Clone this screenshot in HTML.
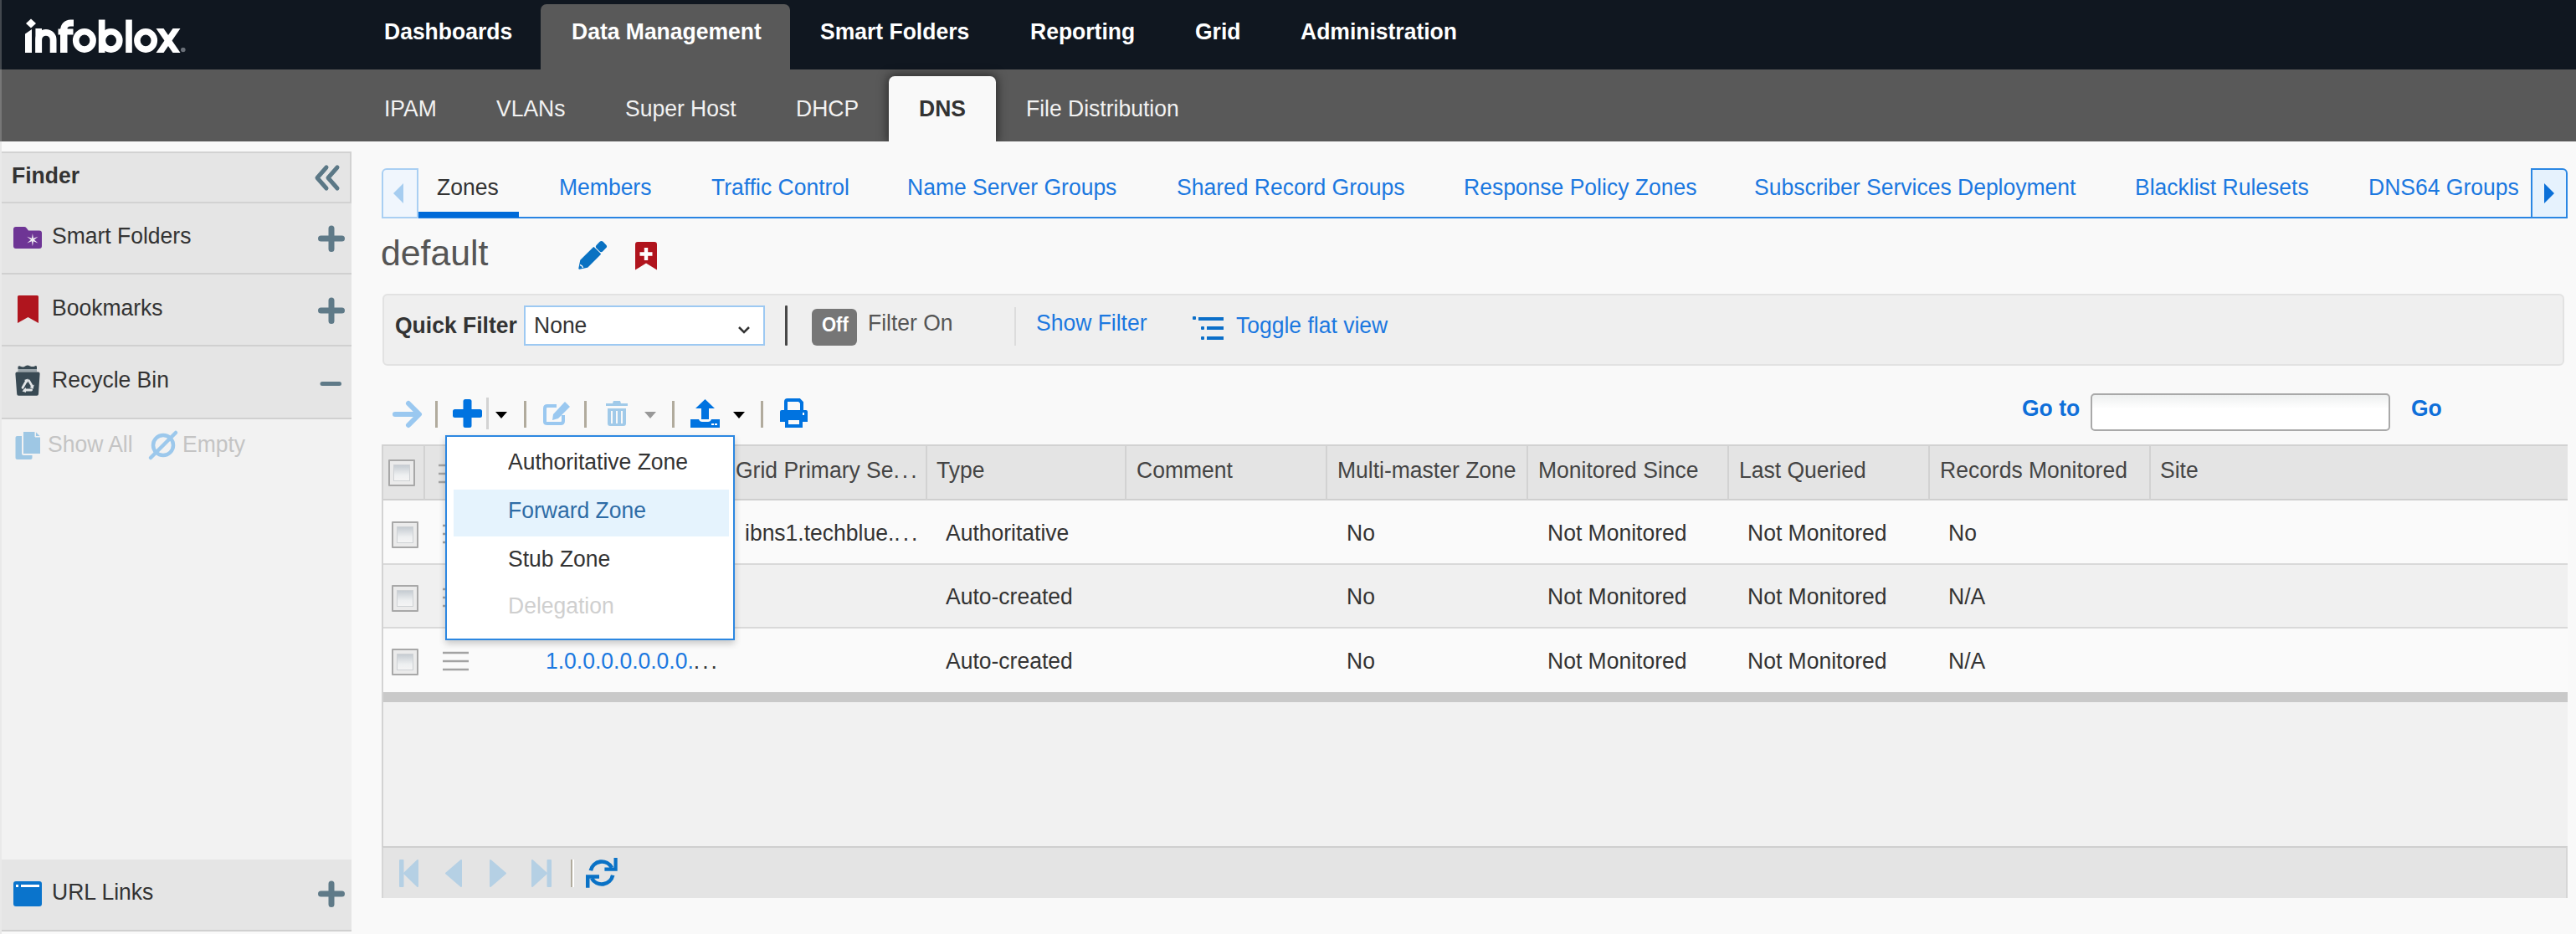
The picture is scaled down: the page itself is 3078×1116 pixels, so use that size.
<!DOCTYPE html>
<html><head><meta charset="utf-8">
<style>
*{box-sizing:border-box;margin:0;padding:0}
html,body{width:3078px;height:1116px;overflow:hidden;background:#f9f9f9;font-family:"Liberation Sans",sans-serif;font-size:26px;color:#333}
.a{position:absolute}
.t{position:absolute;white-space:nowrap;line-height:26px;font-size:26.5px;transform:scaleY(1.07);transform-origin:0 22px}
.b{font-weight:bold}
.lk{color:#1b78e0}
svg{position:absolute;overflow:visible}
.cb{width:32px;height:32px;border:2px solid #a8a8a8;background:#ebebeb;border-radius:1px}.cb::after{content:"";position:absolute;left:4px;top:4px;right:4px;bottom:4px;border:1px solid #cfd2d5;background:linear-gradient(#c6ccd2,#eef0f1 65%,#f4f4f4)}
</style></head><body>
<!-- top bar -->
<div class="a" style="left:0;top:0;width:3078px;height:83px;background:#101720"></div>
<div class="a" style="left:0;top:83px;width:3078px;height:86px;background:#595959"></div>
<div class="a" style="left:646px;top:5px;width:298px;height:78px;background:#595959;border-radius:7px 7px 0 0"></div>
<div class="a" style="left:1062px;top:91px;width:128px;height:78px;background:#f9f9f9;border-radius:7px 7px 0 0;box-shadow:0 0 12px 2px rgba(0,0,0,.5)"></div>
<div class="a" style="left:0;top:169px;width:3078px;height:26px;background:#f9f9f9"></div>
<!-- logo -->
<svg style="left:0;top:0" width="240" height="80" viewBox="0 0 240 80"><g fill="#fff">
<path d="M37 22.5 L43 28 L37 33.5 L31 28 Z"/>
<path d="M30 40.5 L38 35 V63 H30 Z"/>
<path d="M42.4 34 H50 V63 H42.4 Z"/>
<path d="M46.2 63 V47.5 A8.7 8.7 0 0 1 63.6 47.5 V63" fill="none" stroke="#fff" stroke-width="7.8"/>
<path d="M72 34 H80.5 V63 H72 Z"/>
<path d="M76.2 40 V35.5 A8 8 0 0 1 84.2 27.5 H88" fill="none" stroke="#fff" stroke-width="8"/>
<path d="M69.5 34.5 H87.5 V41.5 H69.5 Z"/>
<path d="M117.8 23.5 H125.5 V63 H117.8 Z"/>
<path d="M150.2 23.5 H157.8 V63 H150.2 Z"/>
<path d="M186.5 34 H195.5 L215.5 63 H206.5 Z"/>
<path d="M206.5 34 H215.5 L195.5 63 H186.5 Z"/>
</g>
<g fill="none" stroke="#fff" stroke-width="7.6">
<ellipse cx="100.9" cy="48.4" rx="10.2" ry="10.7"/>
<ellipse cx="132.6" cy="48.4" rx="10.2" ry="10.7"/>
<ellipse cx="174.1" cy="48.4" rx="10.2" ry="10.7"/>
</g>
<circle cx="218.8" cy="59.5" r="2.8" fill="#6a7078"/>
</svg>
<!-- main nav -->
<div class="t b" style="left:459px;top:25px;color:#fff">Dashboards</div>
<div class="t b" style="left:683px;top:25px;color:#fff">Data Management</div>
<div class="t b" style="left:980px;top:25px;color:#fff">Smart Folders</div>
<div class="t b" style="left:1231px;top:25px;color:#fff">Reporting</div>
<div class="t b" style="left:1428px;top:25px;color:#fff">Grid</div>
<div class="t b" style="left:1554px;top:25px;color:#fff">Administration</div>
<!-- sub nav -->
<div class="t" style="left:459px;top:117px;color:#f2f2f2">IPAM</div>
<div class="t" style="left:593px;top:117px;color:#f2f2f2">VLANs</div>
<div class="t" style="left:747px;top:117px;color:#f2f2f2">Super Host</div>
<div class="t" style="left:951px;top:117px;color:#f2f2f2">DHCP</div>
<div class="t b" style="left:1098px;top:117px;color:#333">DNS</div>
<div class="t" style="left:1226px;top:117px;color:#f2f2f2">File Distribution</div>


<!-- tabs -->
<div class="a" style="left:456px;top:259px;width:2611px;height:2px;background:#2a85e3"></div>
<div class="a" style="left:456px;top:201px;width:44px;height:60px;background:#f0f6fd;border:2px solid #a9cff3;border-radius:6px 0 0 0"></div>
<svg style="left:470px;top:219px" width="12" height="24" viewBox="0 0 12 24"><path d="M12 0 V24 L0 12 Z" fill="#a6cdf0"/></svg>
<div class="a" style="left:500px;top:253px;width:120px;height:7px;background:#006ad8"></div>
<div class="t" style="left:522px;top:211px;color:#333">Zones</div>
<div class="t lk" style="left:668px;top:211px">Members</div>
<div class="t lk" style="left:850px;top:211px">Traffic Control</div>
<div class="t lk" style="left:1084px;top:211px">Name Server Groups</div>
<div class="t lk" style="left:1406px;top:211px">Shared Record Groups</div>
<div class="t lk" style="left:1749px;top:211px">Response Policy Zones</div>
<div class="t lk" style="left:2096px;top:211px">Subscriber Services Deployment</div>
<div class="t lk" style="left:2551px;top:211px">Blacklist Rulesets</div>
<div class="t lk" style="left:2830px;top:211px">DNS64 Groups</div>
<div class="a" style="left:3024px;top:201px;width:44px;height:60px;background:#e6f2fd;border:2px solid #2b87e3;border-radius:0 6px 0 0"></div>
<svg style="left:3040px;top:219px" width="12" height="24" viewBox="0 0 12 24"><path d="M0 0 V24 L12 12 Z" fill="#0b70d8"/></svg>
<!-- title -->
<div class="a" style="left:455px;top:281px;font-size:42.8px;line-height:42px;color:#555;white-space:nowrap">default</div>
<svg style="left:680px;top:280px" width="50" height="50" viewBox="0 0 50 50"><g transform="translate(11.6 41.4) rotate(-45)"><path d="M1 0 L9 -5.3 H30.5 V5.3 H9 Z" fill="#0a72c2" stroke="#0a72c2" stroke-width="2" stroke-linejoin="round"/><rect x="32.5" y="-5.3" width="11" height="10.6" rx="2.8" fill="#0a72c2"/><path d="M4.5 -2.5 Q6 0 4.5 2.5" fill="none" stroke="#f9f9f9" stroke-width="1.4"/></g></svg>
<svg style="left:759px;top:289px" width="26" height="34" viewBox="0 0 26 34"><path d="M0 3 Q0 0 3 0 H23 Q26 0 26 3 V33.5 L13 25.5 L0 33.5 Z" fill="#b0141d"/><path d="M13 7 V22 M5.5 14.5 H20.5" stroke="#fff" stroke-width="4.4"/></svg>
<!-- filter bar -->
<div class="a" style="left:457px;top:351px;width:2607px;height:86px;background:#efefef;border:2px solid #e2e2e2;border-radius:6px"></div>
<div class="t b" style="left:472px;top:376px;color:#333">Quick Filter</div>
<div class="a" style="left:626px;top:365px;width:288px;height:48px;background:#fff;border:2px solid #9dc9f2"></div>
<div class="t" style="left:638px;top:376px;color:#333">None</div>
<svg style="left:881px;top:389px" width="16" height="10" viewBox="0 0 16 10"><path d="M2 2 L8 8 L14 2" fill="none" stroke="#333" stroke-width="2.5"/></svg>
<div class="a" style="left:938px;top:365px;width:3px;height:48px;background:#484848;border-radius:1px"></div>
<div class="a" style="left:970px;top:369px;width:54px;height:44px;background:#767676;border-radius:6px"></div>
<div class="t b" style="left:982px;top:378px;font-size:22px;line-height:22px;color:#fff">Off</div>
<div class="t" style="left:1037px;top:373px;color:#555">Filter On</div>
<div class="a" style="left:1212px;top:367px;width:2px;height:46px;background:#dcdcdc"></div>
<div class="t lk" style="left:1238px;top:373px">Show Filter</div>
<svg style="left:1425px;top:378px" width="38" height="30" viewBox="0 0 38 30"><rect x="0" y="0" width="4" height="4" rx="1" fill="#0b6fc9"/><rect x="7" y="1" width="30" height="4" fill="#0b6fc9"/><rect x="10" y="12" width="4" height="4" rx="1" fill="#0b6fc9"/><rect x="17" y="12" width="20" height="4" fill="#0b6fc9"/><rect x="10" y="24" width="4" height="4" rx="1" fill="#0b6fc9"/><rect x="17" y="24" width="20" height="4" fill="#0b6fc9"/></svg>
<div class="t lk" style="left:1477px;top:376px">Toggle flat view</div>

<!-- toolbar -->
<svg style="left:469px;top:479px" width="36" height="32" viewBox="0 0 36 32"><path d="M3 16 H31 M19 3 L32 16 L19 29" fill="none" stroke="#9ac8f0" stroke-width="6" stroke-linecap="round" stroke-linejoin="round"/></svg>
<div class="a" style="left:520px;top:479px;width:3px;height:32px;background:#b1ab9d"></div>
<svg style="left:541px;top:477px" width="35" height="34" viewBox="0 0 35 34"><rect x="12.5" y="0" width="10" height="34" rx="2.5" fill="#0073e0"/><rect x="0" y="12" width="35" height="10" rx="2.5" fill="#0073e0"/></svg>
<div class="a" style="left:581px;top:475px;width:3px;height:38px;background:#d3d3d3"></div>
<svg style="left:592px;top:492px" width="14" height="9" viewBox="0 0 14 9"><path d="M0 0 H14 L7 8 Z" fill="#000"/></svg>
<div class="a" style="left:626px;top:479px;width:3px;height:32px;background:#b1ab9d"></div>
<svg style="left:648px;top:479px" width="34" height="30" viewBox="0 0 34 30"><path d="M17 6 H6 Q3 6 3 9 V25 Q3 27 6 27 H22 Q25 27 25 24 V17" fill="none" stroke="#9ac8f0" stroke-width="4"/><path d="M27 1 L33 7 L19 21 L12 23 L13 16 Z" fill="#9ac8f0"/></svg>
<div class="a" style="left:698px;top:479px;width:3px;height:32px;background:#b1ab9d"></div>
<svg style="left:724px;top:479px" width="26" height="30" viewBox="0 0 26 30"><path d="M0 3 H8 L9 0 H17 L18 3 H26 V6 H0 Z" fill="#a1cae9"/><path d="M2 9 H24 V27 Q24 30 21 30 H5 Q2 30 2 27 Z" fill="#a1cae9"/><path d="M7 12 V27 M13 12 V27 M19 12 V27" stroke="#f9f9f9" stroke-width="2"/></svg>
<svg style="left:770px;top:492px" width="14" height="9" viewBox="0 0 14 9"><path d="M0 0 H14 L7 8 Z" fill="#999"/></svg>
<div class="a" style="left:803px;top:479px;width:3px;height:32px;background:#b1ab9d"></div>
<svg style="left:825px;top:477px" width="35" height="34" viewBox="0 0 35 34"><path d="M17.5 0 L29 11 H22 V24 H13 V11 H6 Z" fill="#0073e0"/><path d="M0 24 H10 Q11 27 14 27 H21 Q24 27 25 24 H35 V34 H0 Z" fill="#0073e0"/><rect x="25" y="29" width="3" height="2" fill="#fff"/><rect x="29" y="29" width="3" height="2" fill="#fff"/></svg>
<svg style="left:876px;top:492px" width="14" height="9" viewBox="0 0 14 9"><path d="M0 0 H14 L7 8 Z" fill="#000"/></svg>
<div class="a" style="left:909px;top:479px;width:3px;height:32px;background:#b1ab9d"></div>
<svg style="left:932px;top:477px" width="33" height="34" viewBox="0 0 33 34"><path d="M7 13 V3 Q7 1 9 1 H23 L26 4 V13" fill="none" stroke="#0073e0" stroke-width="4"/><path d="M2 13 H31 Q33 13 33 15 V27 H27 V22 H6 V27 H0 V15 Q0 13 2 13 Z" fill="#0073e0"/><path d="M8 23 H25 V32 H8 Z" fill="none" stroke="#0073e0" stroke-width="4"/><rect x="27" y="16" width="2" height="3" fill="#fff"/></svg>
<!-- go to -->
<div class="t b lk" style="left:2416px;top:475px;color:#0f6fd9">Go to</div>
<div class="a" style="left:2498px;top:470px;width:358px;height:45px;background:linear-gradient(#eef0f0,#fff 40%);border:2px solid #a9a9a9;border-radius:5px"></div>
<div class="t b lk" style="left:2881px;top:475px;color:#0f6fd9">Go</div>
<!-- grid -->
<div class="a" style="left:456px;top:531px;width:2612px;height:482px;background:#f1f1f1;border-left:2px solid #d6d6d6"></div>
<div class="a" style="left:456px;top:531px;width:2612px;height:67px;background:#e4e4e4;border-top:2px solid #d2d2d2;border-bottom:2px solid #cfcfcf"></div>
<div class="a" style="left:456px;top:598px;width:2612px;height:77px;background:#fafafa;border-bottom:2px solid #d9d9d9"></div>
<div class="a" style="left:456px;top:675px;width:2612px;height:76px;background:#f0f0f0;border-bottom:2px solid #d9d9d9"></div>
<div class="a" style="left:456px;top:751px;width:2612px;height:76px;background:#fafafa"></div>
<div class="a" style="left:456px;top:827px;width:2612px;height:12px;background:#c9c9c9"></div>
<!-- header separators -->
<div class="a" style="left:506px;top:533px;width:2px;height:64px;background:#d2d2d2"></div>
<div class="a" style="left:1106px;top:533px;width:2px;height:64px;background:#d2d2d2"></div>
<div class="a" style="left:1344px;top:533px;width:2px;height:64px;background:#d2d2d2"></div>
<div class="a" style="left:1584px;top:533px;width:2px;height:64px;background:#d2d2d2"></div>
<div class="a" style="left:1824px;top:533px;width:2px;height:64px;background:#d2d2d2"></div>
<div class="a" style="left:2064px;top:533px;width:2px;height:64px;background:#d2d2d2"></div>
<div class="a" style="left:2304px;top:533px;width:2px;height:64px;background:#d2d2d2"></div>
<div class="a" style="left:2568px;top:533px;width:2px;height:64px;background:#d2d2d2"></div>
<div class="t" style="left:879px;top:549px;color:#444">Grid Primary Se<span style="letter-spacing:3px">...</span></div>
<div class="t" style="left:1119px;top:549px;color:#444">Type</div>
<div class="t" style="left:1358px;top:549px;color:#444">Comment</div>
<div class="t" style="left:1598px;top:549px;color:#444">Multi-master Zone</div>
<div class="t" style="left:1838px;top:549px;color:#444">Monitored Since</div>
<div class="t" style="left:2078px;top:549px;color:#444">Last Queried</div>
<div class="t" style="left:2318px;top:549px;color:#444">Records Monitored</div>
<div class="t" style="left:2581px;top:549px;color:#444">Site</div>
<!-- checkboxes -->
<div class="a cb" style="left:464px;top:549px"></div>
<div class="a cb" style="left:468px;top:623px"></div>
<div class="a cb" style="left:468px;top:699px"></div>
<div class="a cb" style="left:468px;top:775px"></div>
<!-- hamburger -->
<svg style="left:529px;top:779px" width="31" height="22" viewBox="0 0 31 22"><path d="M0 1 H31 M0 11 H31 M0 21 H31" stroke="#a3a3a3" stroke-width="2.6"/></svg>
<svg style="left:524px;top:555px" width="31" height="22" viewBox="0 0 31 22"><path d="M0 1 H31 M0 11 H31 M0 21 H31" stroke="#a3a3a3" stroke-width="2.6"/></svg>
<svg style="left:529px;top:627px" width="31" height="22" viewBox="0 0 31 22"><path d="M0 1 H31 M0 11 H31 M0 21 H31" stroke="#a3a3a3" stroke-width="2.6"/></svg>
<svg style="left:529px;top:703px" width="31" height="22" viewBox="0 0 31 22"><path d="M0 1 H31 M0 11 H31 M0 21 H31" stroke="#a3a3a3" stroke-width="2.6"/></svg>
<!-- rows -->
<div class="t" style="left:890px;top:624px;color:#333">ibns1.techblue.<span style="letter-spacing:3px">...</span></div>
<div class="t" style="left:1130px;top:624px;color:#333">Authoritative</div>
<div class="t" style="left:1609px;top:624px;color:#333">No</div>
<div class="t" style="left:1849px;top:624px;color:#333">Not Monitored</div>
<div class="t" style="left:2088px;top:624px;color:#333">Not Monitored</div>
<div class="t" style="left:2328px;top:624px;color:#333">No</div>
<div class="t" style="left:1130px;top:700px;color:#333">Auto-created</div>
<div class="t" style="left:1609px;top:700px;color:#333">No</div>
<div class="t" style="left:1849px;top:700px;color:#333">Not Monitored</div>
<div class="t" style="left:2088px;top:700px;color:#333">Not Monitored</div>
<div class="t" style="left:2328px;top:700px;color:#333">N/A</div>
<div class="t lk" style="left:652px;top:777px">1.0.0.0.0.0.0.0.<span style="color:#333;letter-spacing:3px">...</span></div>
<div class="t" style="left:1130px;top:777px;color:#333">Auto-created</div>
<div class="t" style="left:1609px;top:777px;color:#333">No</div>
<div class="t" style="left:1849px;top:777px;color:#333">Not Monitored</div>
<div class="t" style="left:2088px;top:777px;color:#333">Not Monitored</div>
<div class="t" style="left:2328px;top:777px;color:#333">N/A</div>
<div class="a" style="left:456px;top:531px;width:2px;height:482px;background:#d3d3d3"></div>
<!-- paging -->
<div class="a" style="left:456px;top:1011px;width:2612px;height:62px;background:#e4e4e4;border-top:2px solid #cfcfcf;border-left:2px solid #d6d6d6;border-right:2px solid #d6d6d6"></div>
<svg style="left:476px;top:1026px" width="26" height="36" viewBox="0 0 26 36"><g fill="#b5d0e4" stroke="#b5d0e4" stroke-width="2" stroke-linejoin="round"><rect x="2" y="2" width="3.5" height="31"/><path d="M23 2 V33 L7 17.5 Z"/></g></svg>
<svg style="left:531px;top:1026px" width="22" height="36" viewBox="0 0 22 36"><path d="M20 2 V33 L2 17.5 Z" fill="#b5d0e4" stroke="#b5d0e4" stroke-width="2" stroke-linejoin="round"/></svg>
<svg style="left:584px;top:1026px" width="22" height="36" viewBox="0 0 22 36"><path d="M2 2 V33 L20 17.5 Z" fill="#b5d0e4" stroke="#b5d0e4" stroke-width="2" stroke-linejoin="round"/></svg>
<svg style="left:634px;top:1026px" width="26" height="36" viewBox="0 0 26 36"><g fill="#b5d0e4" stroke="#b5d0e4" stroke-width="2" stroke-linejoin="round"><rect x="20.5" y="2" width="3.5" height="31"/><path d="M2 2 V33 L19 17.5 Z"/></g></svg>
<div class="a" style="left:682px;top:1027px;width:2px;height:33px;background:#b1ab9d;box-shadow:2px 0 0 #fff"></div>
<svg style="left:699px;top:1024px" width="40" height="38" viewBox="0 0 40 38"><g fill="none" stroke="#0a72c6" stroke-width="4.6"><path d="M6.80 16.19 A13.5 13.5 0 0 1 32.03 12.87"/><path d="M33.20 21.81 A13.5 13.5 0 0 1 8.08 25.34"/></g><g fill="#0a72c6"><path d="M34.5 1 H38.7 V16.8 H23.4 V12.4 H34.5 Z"/><path d="M1 21.2 H17 V25.8 H5.5 V36.8 H1 Z"/></g></svg>
<!-- dropdown menu -->
<div class="a" style="left:532px;top:520px;width:346px;height:245px;background:#fff;border:2px solid #2c87e1;box-shadow:0 4px 8px rgba(0,0,0,.2)"></div>
<div class="a" style="left:542px;top:585px;width:329px;height:56px;background:#e5f3fd"></div>
<div class="t" style="left:607px;top:539px;color:#333">Authoritative Zone</div>
<div class="t" style="left:607px;top:597px;color:#2e6ca6">Forward Zone</div>
<div class="t" style="left:607px;top:655px;color:#333">Stub Zone</div>
<div class="t" style="left:607px;top:711px;color:#cfcfcf">Delegation</div>
<!-- left panel -->
<div class="a" style="left:2px;top:181px;width:418px;height:932px;background:#f2f2f2;border-bottom:2px solid #d3d3d3"></div>
<div class="a" style="left:2px;top:181px;width:418px;height:62px;background:#e5e5e5;border:2px solid #d2d2d2;border-left:none"></div>
<div class="t b" style="left:14px;top:197px;color:#333">Finder</div>
<svg style="left:376px;top:197px" width="32" height="32" viewBox="0 0 32 32"><path d="M14 3 L3 15.5 L14 28 M27 3 L16 15.5 L27 28" fill="none" stroke="#5b7886" stroke-width="5" stroke-linecap="round" stroke-linejoin="round"/></svg>
<div class="a" style="left:2px;top:243px;width:418px;height:85px;background:#e5e5e5;border-bottom:2px solid #d0d0d0"></div>
<div class="a" style="left:2px;top:328px;width:418px;height:86px;background:#e5e5e5;border-bottom:2px solid #d0d0d0"></div>
<div class="a" style="left:2px;top:414px;width:418px;height:87px;background:#e5e5e5;border-bottom:2px solid #d0d0d0"></div>
<div class="t" style="left:62px;top:269px;color:#333">Smart Folders</div>
<div class="t" style="left:62px;top:355px;color:#333">Bookmarks</div>
<div class="t" style="left:62px;top:441px;color:#333">Recycle Bin</div>
<!-- plus icons -->
<svg style="left:380px;top:270px" width="32" height="32" viewBox="0 0 32 32"><path d="M16 3 V27.5 M3.5 15 H28.5" stroke="#5f7a88" stroke-width="7" stroke-linecap="round"/></svg>
<svg style="left:380px;top:356px" width="32" height="32" viewBox="0 0 32 32"><path d="M16 3 V27.5 M3.5 15 H28.5" stroke="#5f7a88" stroke-width="7" stroke-linecap="round"/></svg>
<svg style="left:382px;top:456px" width="28" height="6" viewBox="0 0 28 6"><path d="M3 2.5 H23.5" stroke="#5f7a88" stroke-width="5" stroke-linecap="round"/></svg>
<!-- folder icon -->
<svg style="left:16px;top:271px" width="34" height="26" viewBox="0 0 34 26"><path d="M0 3 Q0 0 3 0 H13 Q14.5 0 15.5 1.2 L18 4.6 H31 Q34 4.6 34 7.6 V23 Q34 26 31 26 H3 Q0 26 0 23 Z" fill="#6e3595"/><polygon points="22.90,8.00 23.90,13.87 29.48,11.80 24.90,15.60 29.48,19.40 23.90,17.33 22.90,23.20 21.90,17.33 16.32,19.40 20.90,15.60 16.32,11.80 21.90,13.87" fill="#f0ecf3"/></svg>
<!-- bookmark icon -->
<svg style="left:21px;top:353px" width="25" height="33" viewBox="0 0 25 33"><path d="M0 1.5 Q0 0 1.5 0 H23.5 Q25 0 25 1.5 V33 L12.5 26 L0 33 Z" fill="#b0151e"/></svg>
<!-- trash icon -->
<svg style="left:18px;top:436px" width="30" height="37" viewBox="0 0 30 37"><path d="M3.5 5 V2 Q5 0.5 7 2 Q10 3.2 12.5 1.2 Q15 -0.2 18 1.5 Q21 2.8 24 1.2 Q25.5 0.8 26 2 V5 Z" fill="#394a54"/><rect x="3.5" y="5" width="22.5" height="3.4" fill="#9aa5ab"/><path d="M0.4 10.4 Q0.4 8.4 2.4 8.4 H27.6 Q29.6 8.4 29.6 10.4 L28 34.7 Q28 36.7 26 36.7 H4.2 Q2.2 36.7 2.2 34.7 Z" fill="#394a54"/><g fill="none" stroke="#e2e5e7" stroke-width="2.8" stroke-linecap="round"><path d="M16.4 18.6 L20.6 25.6"/><path d="M19.6 30 H11.6"/><path d="M9 27.2 L13.2 19.8"/></g><g fill="#e2e5e7"><path d="M22.8 23.5 L21.5 29 L17.5 26.5 Z"/><path d="M13 27 L8.5 31.5 L13 33 Z"/><path d="M11 18 L15.5 16.5 L15 21.5 Z"/></g></svg>
<!-- show all / empty -->
<svg style="left:18px;top:515px" width="31" height="34" viewBox="0 0 31 34"><rect x="0.5" y="6" width="20" height="28" rx="2" fill="#9ec7e4"/><path d="M9 1 Q9 0 10 0 H24 L31 7 V27 Q31 28 30 28 H10 Q9 28 9 27 Z" fill="#9ec7e4" stroke="#f2f2f2" stroke-width="2"/><path d="M24 0 V7 H31" fill="#f2f2f2" stroke="#f2f2f2" stroke-width="1"/><path d="M25 1.5 L29.5 6 H25 Z" fill="#9ec7e4"/></svg>
<div class="t" style="left:57px;top:518px;color:#c4c4c4">Show All</div>
<svg style="left:177px;top:514px" width="36" height="36" viewBox="0 0 36 36"><circle cx="18" cy="18" r="12" fill="none" stroke="#9cc8ec" stroke-width="4.5"/><path d="M3 33 L33 3" stroke="#9cc8ec" stroke-width="4.5" stroke-linecap="round"/></svg>
<div class="t" style="left:218px;top:518px;color:#c4c4c4">Empty</div>
<!-- url links -->
<div class="a" style="left:2px;top:1027px;width:418px;height:86px;background:#e5e5e5;border-bottom:2px solid #d0d0d0"></div>
<svg style="left:16px;top:1053px" width="34" height="30" viewBox="0 0 34 30"><rect x="0" y="0" width="34" height="30" rx="3" fill="#0a74cc"/><rect x="3" y="4" width="3" height="3" fill="#fff"/><rect x="9" y="4" width="22" height="3" fill="#fff"/></svg>
<div class="t" style="left:62px;top:1053px;color:#333">URL Links</div>
<svg style="left:380px;top:1053px" width="32" height="32" viewBox="0 0 32 32"><path d="M16 3 V27.5 M3.5 15 H28.5" stroke="#5f7a88" stroke-width="7" stroke-linecap="round"/></svg>
<div class="a" style="left:0;top:0;width:2px;height:1116px;background:rgba(193,193,193,.29)"></div>
</body></html>
